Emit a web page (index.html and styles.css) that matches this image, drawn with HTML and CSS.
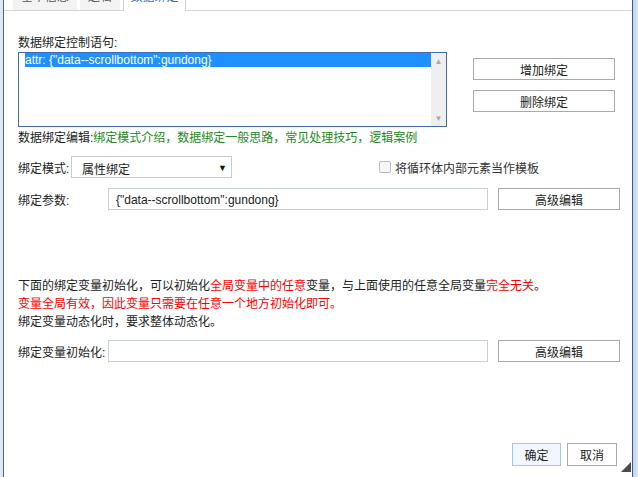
FILE: index.html
```html
<!DOCTYPE html>
<html lang="zh">
<head>
    <meta charset="UTF-8">
    <title>数据绑定</title>
    <link rel="stylesheet" href="styles.css">
</head>
<body>
    <div class="frame">
        <div class="edge-left"></div>

        <div class="panel">
            <div class="tabs">
                <div class="tab"><span>基本信息</span></div>
                <div class="tab"><span>逻辑</span></div>
                <div class="tab active"><span>数据绑定</span></div>
            </div>

            <div class="content">
                <div class="bind-top">
                    <div class="bind-list-col">
                        <div class="label">数据绑定控制语句:</div>
                        <div class="listbox">
                            <div class="list-items">
                                <div class="list-item selected">attr: {"data--scrollbottom":gundong}</div>
                            </div>
                            <div class="scrollbar"><span>▲</span><span>▼</span></div>
                        </div>
                    </div>
                    <div class="bind-actions">
                        <button class="btn btn-wide">增加绑定</button>
                        <button class="btn btn-wide">删除绑定</button>
                    </div>
                </div>

                <div class="edit-links">数据绑定编辑:<span class="green">绑定模式介绍，数据绑定一般思路，常见处理技巧，逻辑案例</span></div>

                <div class="row row-mode">
                    <div class="mode-label">绑定模式:</div>
                    <div class="select"><span>属性绑定</span><span class="arrow">▼</span></div>
                    <div class="check-wrap">
                        <span class="checkbox"></span>
                        <span>将循环体内部元素当作模板</span>
                    </div>
                </div>

                <div class="row row-param">
                    <div class="field-label">绑定参数:</div>
                    <div class="input">{"data--scrollbottom":gundong}</div>
                    <button class="btn btn-edit">高级编辑</button>
                </div>

                <div class="notes">
                    <div>下面的绑定变量初始化，可以初始化<span class="red">全局变量中的任意</span>变量，与上面使用的任意全局变量<span class="red">完全无关</span>。</div>
                    <div class="red">变量全局有效，因此变量只需要在任意一个地方初始化即可。</div>
                    <div>绑定变量动态化时，要求整体动态化。</div>
                </div>

                <div class="row row-init">
                    <div class="field-label">绑定变量初始化:</div>
                    <div class="input"></div>
                    <button class="btn btn-edit">高级编辑</button>
                </div>

                <div class="footer">
                    <button class="btn btn-ok">确定</button>
                    <button class="btn btn-cancel">取消</button>
                </div>
            </div>

            <div class="grip"></div>
        </div>

        <div class="edge-right"></div>
    </div>
</body>
</html>
```

FILE: styles.css
```css
* {
    margin: 0;
    padding: 0;
    box-sizing: border-box;
}

body {
    width: 638px;
    height: 477px;
    overflow: hidden;
    background: #fff;
    font-family: "Liberation Sans", "Noto Sans CJK SC", sans-serif;
    font-size: 12px;
    color: #222;
}

.frame {
    display: flex;
    height: 477px;
}

.edge-left {
    width: 4px;
    background: #e3e6eb;
    border-right: 1px solid #3667b0;
}

.edge-right {
    width: 6px;
    border-left: 1px solid #2f5fa8;
    background: linear-gradient(to right, #c3d1ea, #dfe5ef);
}

.panel {
    flex: 1;
    position: relative;
    background: #fff;
}

/* tab strip, text is cut off at the top */
.tabs {
    display: flex;
    height: 11px;
    padding-left: 9px;
    gap: 3px;
    border-bottom: 1px solid #d6d6d6;
}

.tab {
    height: 10px;
    overflow: hidden;
    display: flex;
    align-items: flex-end;
    justify-content: center;
    background: #f3f3f3;
    color: #555;
    width: 64px;
}

.tab:nth-child(2) {
    width: 40px;
}

.tab span {
    line-height: 12px;
    margin-bottom: 7px;
    white-space: nowrap;
}

.tab.active {
    width: 63px;
    height: 11px;
    background: #fff;
    color: #3b6cc0;
    border-left: 1px solid #d0d0d0;
    border-right: 1px solid #d0d0d0;
}

.tab.active span {
    margin-bottom: 8px;
}

.content {
    padding: 25px 0 0 14px;
}

.bind-top {
    display: flex;
}

.bind-list-col {
    width: 429px;
}

.label {
    line-height: 14px;
    margin-bottom: 2px;
}

.listbox {
    display: flex;
    height: 75px;
    border: 1px solid #3d6eb5;
}

.list-items {
    flex: 1;
    padding-left: 6px;
}

.list-item {
    line-height: 14px;
    white-space: nowrap;
}

.list-item.selected {
    background: #1e90ff;
    color: #fff;
}

.scrollbar {
    width: 15px;
    background: #efefef;
    display: flex;
    flex-direction: column;
    justify-content: space-between;
    align-items: center;
    color: #a9a9a9;
    font-size: 8px;
    padding: 4px 0 3px;
}

.bind-actions {
    margin-left: 26px;
    padding-top: 22px;
    display: flex;
    flex-direction: column;
    gap: 10px;
}

.btn {
    font-family: "Liberation Sans", "Noto Sans CJK SC", sans-serif;
    font-size: 12px;
    color: #222;
    background: #fff;
    border: 1px solid #a9a9a9;
    height: 22px;
}

.btn-wide {
    width: 142px;
}

.edit-links {
    margin-top: 4px;
    line-height: 14px;
}

.green {
    color: #238a23;
}

.red {
    color: #ff0000;
}

.row {
    display: flex;
    align-items: center;
    height: 22px;
}

.row-mode {
    margin-top: 11px;
}

.mode-label {
    width: 53px;
}

.select {
    width: 161px;
    height: 22px;
    border: 1px solid #c9cdd2;
    display: flex;
    align-items: center;
    justify-content: space-between;
    padding: 2px 4px 0 10px;
}

.select .arrow {
    font-size: 9px;
    color: #111;
}

.check-wrap {
    margin-left: 147px;
    display: flex;
    align-items: center;
    gap: 4px;
    color: #333;
}

.checkbox {
    width: 12px;
    height: 12px;
    border: 1px solid #b9b9b9;
    border-radius: 2px;
    background: #f6f6f6;
}

.row-param {
    margin-top: 10px;
}

.field-label {
    width: 90px;
}

.input {
    width: 380px;
    height: 22px;
    border: 1px solid #c8d0d8;
    padding: 2px 0 0 7px;
    line-height: 18px;
}

.btn-edit {
    margin-left: 10px;
    width: 122px;
}

.notes {
    margin-top: 67px;
    line-height: 18px;
}

.row-init {
    margin-top: 9px;
}

.footer {
    margin-top: 81px;
    display: flex;
    justify-content: flex-end;
    gap: 6px;
    padding-right: 15px;
}

.btn-ok {
    width: 49px;
    height: 23px;
    background: #f1f7ff;
    border-color: #9fc4f8;
}

.btn-cancel {
    width: 50px;
    height: 23px;
}

.grip {
    position: absolute;
    right: 1px;
    bottom: 5px;
    width: 0;
    height: 0;
    border-left: 10px solid transparent;
    border-bottom: 10px solid #4a4a4a;
}
```
